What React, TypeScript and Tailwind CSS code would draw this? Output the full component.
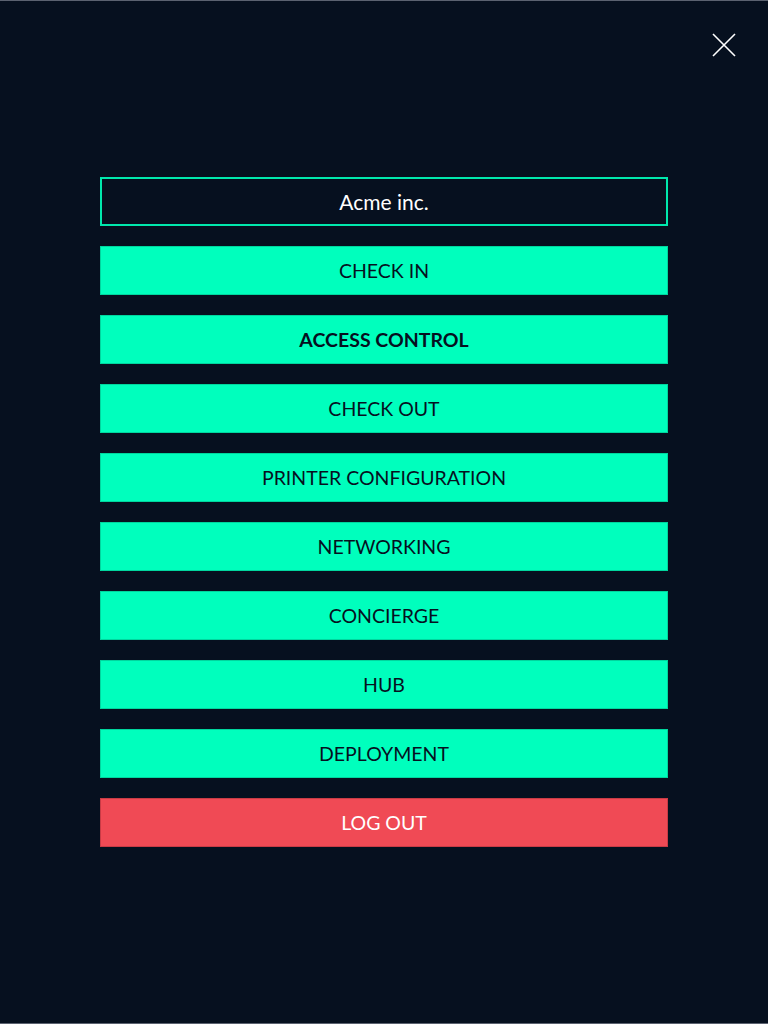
import React from "react";

const items = [
  { label: "CHECK IN", bold: false },
  { label: "ACCESS CONTROL", bold: true },
  { label: "CHECK OUT", bold: false },
  { label: "PRINTER CONFIGURATION", bold: false },
  { label: "NETWORKING", bold: false },
  { label: "CONCIERGE", bold: false },
  { label: "HUB", bold: false },
  { label: "DEPLOYMENT", bold: false },
];

export default function App() {
  return (
    <div
      className="w-[768px] h-[1024px] bg-[#06101f] border-y border-[#5b6270] flex flex-col"
      style={{ fontFamily: "Lato, 'Liberation Sans', sans-serif" }}
    >
      <div className="flex justify-end pt-[31px] pr-[31px]">
        <button className="w-[26px] h-[26px] flex items-center justify-center">
          <svg width="24" height="24" viewBox="0 0 24 24" fill="none" stroke="#ffffff" strokeWidth="1.6">
            <path d="M1 1L23 23M23 1L1 23" />
          </svg>
        </button>
      </div>
      <div className="flex flex-col gap-[20px] px-[100px] pt-[119px]">
        <div className="h-[49px] border-2 border-[#00e8ad] flex items-center justify-center text-white text-[21px]">
          Acme inc.
        </div>
        {items.map((it) => (
          <div
            key={it.label}
            className={`h-[49px] bg-[#00ffbd] border border-[#00d69e] flex items-center justify-center text-[#06101f] text-[19.5px] ${it.bold ? "font-bold" : "font-normal"}`}
          >
            {it.label}
          </div>
        ))}
        <div className="h-[49px] bg-[#f04a55] border border-[#c93b45] flex items-center justify-center text-white text-[19.5px]">
          LOG OUT
        </div>
      </div>
    </div>
  );
}
